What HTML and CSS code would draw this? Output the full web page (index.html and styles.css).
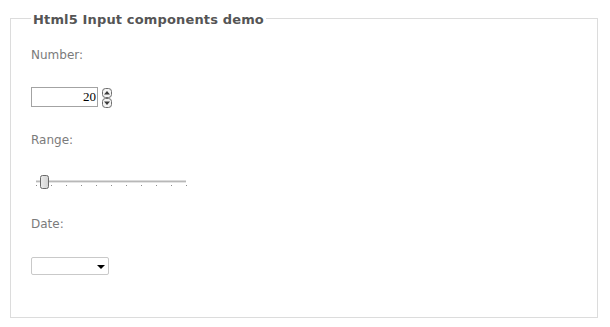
FILE: index.html
```html
<!DOCTYPE html>
<html>
<head>
<meta charset="utf-8">
<title>Html5 Input components demo</title>
<link rel="stylesheet" href="styles.css">
</head>
<body>
<fieldset class="demo">
  <legend class="demo-title">Html5 Input components demo</legend>

  <div class="label label-first">Number:</div>
  <div class="number-row">
    <div class="num-input">20</div>
    <svg class="spinner" width="10" height="20" viewBox="0 0 10 20">
      <rect x="0.5" y="0.5" width="9" height="9" rx="3" fill="#f4f4f4" stroke="#6e6e6e"/>
      <path d="M2 6.5 L5 3 L8 6.5 Z" fill="#3a3a3a"/>
      <rect x="0.5" y="10.5" width="9" height="9" rx="3" fill="#f4f4f4" stroke="#6e6e6e"/>
      <path d="M2 13.5 L5 17 L8 13.5 Z" fill="#3a3a3a"/>
    </svg>
  </div>

  <div class="label label-gap">Range:</div>
  <svg class="slider" width="160" height="16" viewBox="0 0 160 16">
    <rect x="5" y="6.5" width="150" height="1.5" fill="#b8b8b8"/>
    <rect x="5" y="8" width="150" height="1" fill="#e4e4e4"/>
    <g fill="#8a8a8a">
      <rect x="5" y="11" width="1" height="1"/>
      <rect x="20" y="11" width="1" height="1"/>
      <rect x="35" y="11" width="1" height="1"/>
      <rect x="50" y="11" width="1" height="1"/>
      <rect x="65" y="11" width="1" height="1"/>
      <rect x="80" y="11" width="1" height="1"/>
      <rect x="95" y="11" width="1" height="1"/>
      <rect x="110" y="11" width="1" height="1"/>
      <rect x="125" y="11" width="1" height="1"/>
      <rect x="140" y="11" width="1" height="1"/>
      <rect x="155" y="11" width="1" height="1"/>
    </g>
    <defs>
      <linearGradient id="thumbFill" x1="0" y1="0" x2="1" y2="0">
        <stop offset="0" stop-color="#ececec"/>
        <stop offset="1" stop-color="#d2d2d2"/>
      </linearGradient>
    </defs>
    <rect x="9.5" y="1.5" width="8" height="13" rx="2" fill="url(#thumbFill)" stroke="#6a6a6a"/>
  </svg>

  <div class="label label-gap2">Date:</div>
  <div class="date-select">
    <span class="caret"></span>
  </div>
</fieldset>
</body>
</html>
```
FILE: styles.css
```css
html, body {
  margin: 0;
  padding: 0;
  background: #ffffff;
}

.demo {
  margin: 10px 12px 0 10px;
  padding: 0 20px 42px 20px;
  border: 1px solid #dcdcdc;
  min-width: 0;
}

.demo-title {
  padding: 3px 2px 0 2px;
  font-family: "DejaVu Sans", sans-serif;
  font-weight: bold;
  font-size: 13px;
  line-height: 14px;
  letter-spacing: 0.15px;
  color: #555555;
}

.label {
  font-family: "DejaVu Sans", sans-serif;
  font-size: 12px;
  line-height: 16px;
  color: #7b7b7b;
}

.label-first {
  margin-top: 20px;
}

.label-gap {
  margin-top: 24px;
}

.label-gap2 {
  margin-top: 26px;
}

.number-row {
  margin-top: 24px;
  display: flex;
  align-items: flex-start;
  gap: 4px;
}

.num-input {
  box-sizing: border-box;
  width: 67px;
  height: 20px;
  border: 1px solid #a3a3a3;
  padding-right: 1px;
  text-align: right;
  font-family: "Liberation Serif", serif;
  font-size: 13px;
  line-height: 18px;
  color: #000000;
}

.spinner {
  display: block;
  margin-top: 1px;
}

.slider {
  display: block;
  margin-top: 26px;
}

.date-select {
  box-sizing: border-box;
  margin-top: 25px;
  width: 78px;
  height: 18px;
  border: 1px solid #c9c9c9;
  border-radius: 2px;
  display: flex;
  align-items: center;
  justify-content: flex-end;
  padding-right: 3px;
}

.caret {
  width: 0;
  height: 0;
  border-left: 4px solid transparent;
  border-right: 4px solid transparent;
  border-top: 4px solid #000000;
  margin-top: 1px;
}
```
